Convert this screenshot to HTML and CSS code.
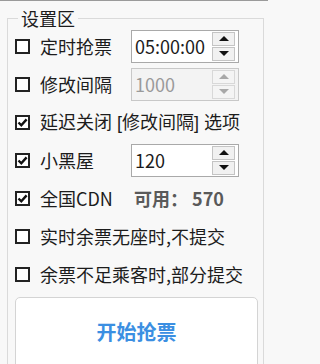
FILE: index.html
```html
<!DOCTYPE html>
<html lang="zh-CN">
<head>
<meta charset="utf-8">
<link rel="stylesheet" href="styles.css">
</head>
<body>
<div class="page">
  <fieldset class="group">
    <legend class="legend">设置区</legend>
    <div class="rows">
      <div class="row">
        <span class="cb"></span>
        <span class="label">定时抢票</span>
        <div class="spin">
          <span class="spin-val">05:00:00</span>
          <div class="spin-btns">
            <span class="sb up"><i class="tri-up"></i></span>
            <span class="sb down"><i class="tri-down"></i></span>
          </div>
        </div>
      </div>
      <div class="row">
        <span class="cb"></span>
        <span class="label">修改间隔</span>
        <div class="spin disabled">
          <span class="spin-val">1000</span>
          <div class="spin-btns">
            <span class="sb up"><i class="tri-up"></i></span>
            <span class="sb down"><i class="tri-down"></i></span>
          </div>
        </div>
      </div>
      <div class="row">
        <span class="cb checked"><svg viewBox="0 0 11 11" width="11" height="11"><path d="M1.5 5.5 L4.3 8.3 L9.6 2.4" fill="none" stroke="#111" stroke-width="2.4"/></svg></span>
        <span class="text">延迟关闭<span class="lat"> [</span>修改间隔<span class="lat">] </span>选项</span>
      </div>
      <div class="row">
        <span class="cb checked"><svg viewBox="0 0 11 11" width="11" height="11"><path d="M1.5 5.5 L4.3 8.3 L9.6 2.4" fill="none" stroke="#111" stroke-width="2.4"/></svg></span>
        <span class="label">小黑屋</span>
        <div class="spin">
          <span class="spin-val">120</span>
          <div class="spin-btns">
            <span class="sb up"><i class="tri-up"></i></span>
            <span class="sb down"><i class="tri-down"></i></span>
          </div>
        </div>
      </div>
      <div class="row">
        <span class="cb checked"><svg viewBox="0 0 11 11" width="11" height="11"><path d="M1.5 5.5 L4.3 8.3 L9.6 2.4" fill="none" stroke="#111" stroke-width="2.4"/></svg></span>
        <span class="label">全国CDN</span>
        <span class="avail">可用：&nbsp;570</span>
      </div>
      <div class="row">
        <span class="cb"></span>
        <span class="text">实时余票无座时,不提交</span>
      </div>
      <div class="row">
        <span class="cb"></span>
        <span class="text">余票不足乘客时,部分提交</span>
      </div>
    </div>
    <div class="btn-wrap">
      <button class="start">开始抢票</button>
    </div>
  </fieldset>
</div>
</body>
</html>
```

FILE: styles.css
```css
html, body {
  margin: 0;
  padding: 0;
  background: #f8f8f8;
  overflow: hidden;
}
body {
  width: 268px;
  height: 364px;
  font-family: "Noto Sans CJK SC", "Microsoft YaHei", sans-serif;
  font-size: 18px;
  color: #1c1c1c;
}
.page {
  border-top: 1px solid #9a9a9a;
  height: 363px;
  overflow: hidden;
}
.group {
  margin: 5px 4px 0 7px;
  padding: 0;
  border: 1px solid #dadada;
  min-width: 0;
  height: 400px;
}
.legend {
  margin-left: 10px;
  padding: 0 3px;
  line-height: 24px;
  height: 24px;
}
.rows {
  display: flex;
  flex-direction: column;
  margin-top: -3px;
}
.row {
  height: 38px;
  display: flex;
  align-items: center;
  padding-left: 7px;
}
.cb {
  width: 11px;
  height: 11px;
  border: 2px solid #222;
  background: #fff;
  margin-right: 10px;
  flex: none;
  display: flex;
}
.label {
  width: 91px;
  flex: none;
  line-height: 24px;
}
.text {
  line-height: 24px;
  white-space: nowrap;
}
.lat {
  font-family: "Liberation Sans", sans-serif;
  white-space: pre;
}
.spin {
  width: 106px;
  height: 31px;
  border: 1px solid #a9a9a9;
  background: #fff;
  display: flex;
  align-items: center;
  justify-content: space-between;
  box-sizing: content-box;
}
.spin-val {
  padding-left: 3px;
  line-height: 24px;
}
.spin-btns {
  display: flex;
  flex-direction: column;
  gap: 1px;
  margin-right: 3px;
}
.sb {
  width: 21px;
  height: 12px;
  border: 1px solid #c4c4c4;
  background: #f1f1f1;
  display: flex;
  align-items: center;
  justify-content: center;
}
.tri-up {
  width: 0;
  height: 0;
  border-left: 5px solid transparent;
  border-right: 5px solid transparent;
  border-bottom: 5px solid #111;
}
.tri-down {
  width: 0;
  height: 0;
  border-left: 5px solid transparent;
  border-right: 5px solid transparent;
  border-top: 5px solid #111;
}
.spin.disabled {
  background: #f3f3f3;
  border-color: #c8c8c8;
}
.spin.disabled .spin-val {
  color: #9a9a9a;
}
.spin.disabled .sb {
  border-color: #d8d8d8;
  background: #f4f4f4;
}
.spin.disabled .tri-up {
  border-bottom-color: #a8a8a8;
}
.spin.disabled .tri-down {
  border-top-color: #a8a8a8;
}
.avail {
  font-weight: bold;
  color: #5a5a5a;
  padding-left: 3px;
  line-height: 24px;
}
.btn-wrap {
  padding: 4px 5px 0 7px;
}
.start {
  display: block;
  width: 243px;
  height: 72px;
  border: 1px solid #d4d4d4;
  border-radius: 5px;
  background: #fff;
  color: #3b8fe2;
  font-family: "Noto Sans CJK SC", "Microsoft YaHei", sans-serif;
  font-size: 20px;
  font-weight: bold;
  padding: 0 0 4px 0;
}
```
